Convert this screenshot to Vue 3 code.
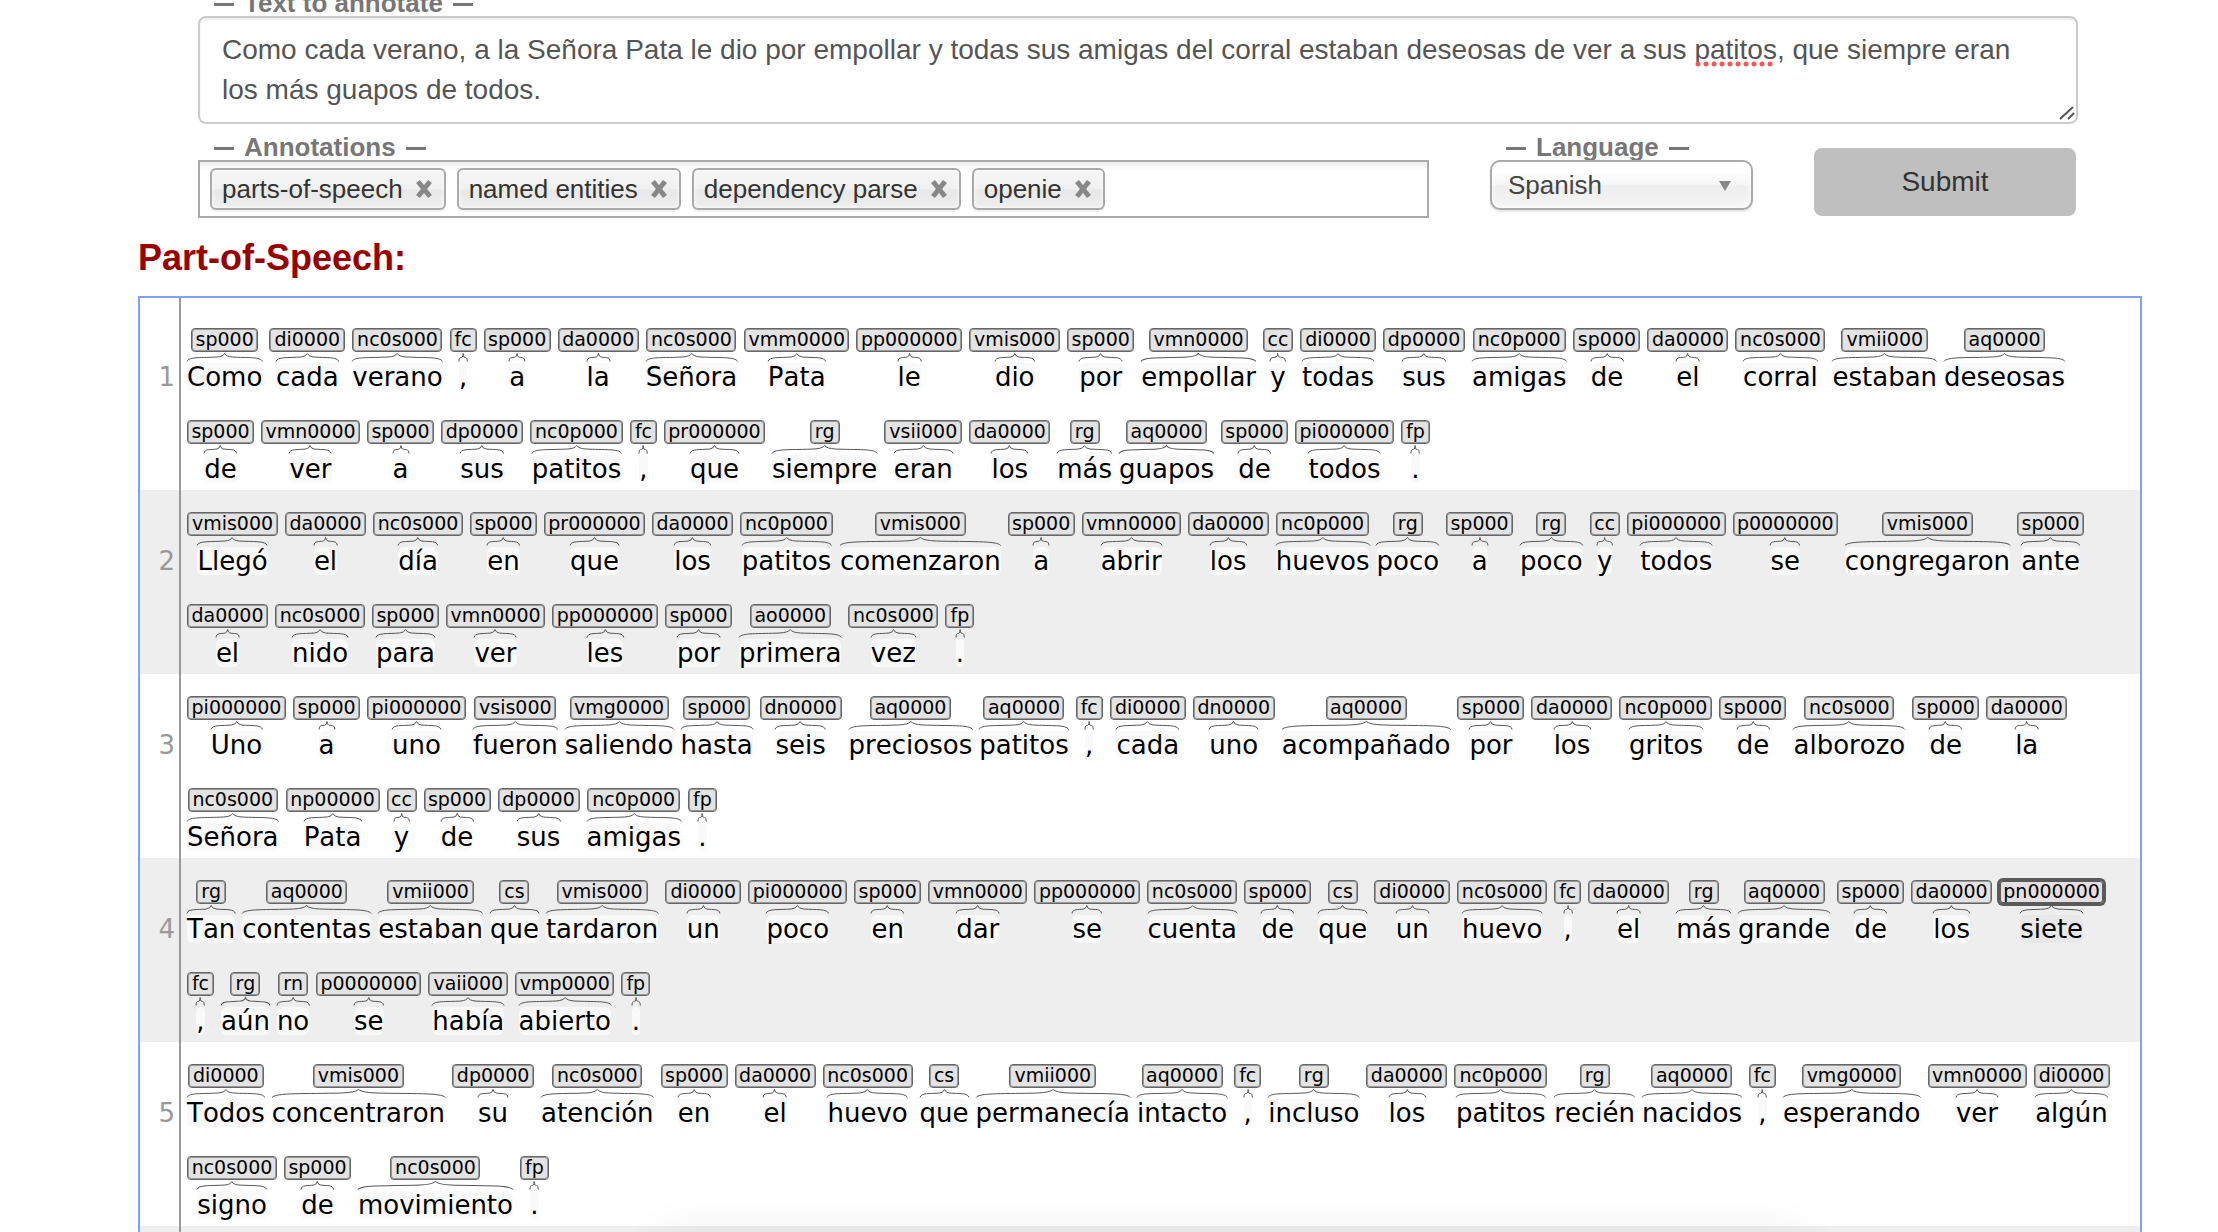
<script setup>
import { ref } from 'vue'

const text = ref(
  'Como cada verano, a la Señora Pata le dio por empollar y todas sus amigas del corral estaban deseosas de ver a sus patitos, que siempre eran los más guapos de todos.'
)
const language = ref('es')
const annotators = ref(['parts-of-speech', 'named entities', 'dependency parse', 'openie'])
const remove = (name) => {
  annotators.value = annotators.value.filter((a) => a !== name)
}

// Box width of every tag, in pixels
const tagWidths = {
  fc: 27, fp: 29, rg: 30, rn: 30, cc: 30, cs: 30,
  sp000: 67, di0000: 76, vsii000: 78, vaii000: 80,
  da0000: 81, aq0000: 81, ao0000: 81, dp0000: 82, dn0000: 82, vsis000: 82,
  vmii000: 87, nc0s000: 90, vmis000: 91, nc0p000: 93, np00000: 94,
  vmn0000: 99, vmg0000: 99, vmp0000: 99, pi000000: 99, pr000000: 101,
  vmm0000: 105, pn000000: 105, p0000000: 105, pp000000: 106
}

const parse = (line) =>
  line.split(' ').map((pair) => {
    const [word, tag] = pair.split('/')
    return { word, tag, width: tagWidths[tag] }
  })

const sentences = [
  [
    'Como/sp000 cada/di0000 verano/nc0s000 ,/fc a/sp000 la/da0000 Señora/nc0s000 Pata/vmm0000 le/pp000000 dio/vmis000 por/sp000 empollar/vmn0000 y/cc todas/di0000 sus/dp0000 amigas/nc0p000 de/sp000 el/da0000 corral/nc0s000 estaban/vmii000 deseosas/aq0000',
    'de/sp000 ver/vmn0000 a/sp000 sus/dp0000 patitos/nc0p000 ,/fc que/pr000000 siempre/rg eran/vsii000 los/da0000 más/rg guapos/aq0000 de/sp000 todos/pi000000 ./fp'
  ],
  [
    'Llegó/vmis000 el/da0000 día/nc0s000 en/sp000 que/pr000000 los/da0000 patitos/nc0p000 comenzaron/vmis000 a/sp000 abrir/vmn0000 los/da0000 huevos/nc0p000 poco/rg a/sp000 poco/rg y/cc todos/pi000000 se/p0000000 congregaron/vmis000 ante/sp000',
    'el/da0000 nido/nc0s000 para/sp000 ver/vmn0000 les/pp000000 por/sp000 primera/ao0000 vez/nc0s000 ./fp'
  ],
  [
    'Uno/pi000000 a/sp000 uno/pi000000 fueron/vsis000 saliendo/vmg0000 hasta/sp000 seis/dn0000 preciosos/aq0000 patitos/aq0000 ,/fc cada/di0000 uno/dn0000 acompañado/aq0000 por/sp000 los/da0000 gritos/nc0p000 de/sp000 alborozo/nc0s000 de/sp000 la/da0000',
    'Señora/nc0s000 Pata/np00000 y/cc de/sp000 sus/dp0000 amigas/nc0p000 ./fp'
  ],
  [
    'Tan/rg contentas/aq0000 estaban/vmii000 que/cs tardaron/vmis000 un/di0000 poco/pi000000 en/sp000 dar/vmn0000 se/pp000000 cuenta/nc0s000 de/sp000 que/cs un/di0000 huevo/nc0s000 ,/fc el/da0000 más/rg grande/aq0000 de/sp000 los/da0000 siete/pn000000',
    ',/fc aún/rg no/rn se/p0000000 había/vaii000 abierto/vmp0000 ./fp'
  ],
  [
    'Todos/di0000 concentraron/vmis000 su/dp0000 atención/nc0s000 en/sp000 el/da0000 huevo/nc0s000 que/cs permanecía/vmii000 intacto/aq0000 ,/fc incluso/rg los/da0000 patitos/nc0p000 recién/rg nacidos/aq0000 ,/fc esperando/vmg0000 ver/vmn0000 algún/di0000',
    'signo/nc0s000 de/sp000 movimiento/nc0s000 ./fp'
  ]
].map((lines) => lines.map(parse))
</script>

<template>
  <div class="page">
    <form class="form" @submit.prevent>
      <div class="field">
        <label class="legend" for="text">Text to annotate</label>
        <div class="text-wrap">
          <textarea id="text" v-model="text" spellcheck="false"></textarea>
          <span class="spelling"></span>
          <svg class="grip" width="16" height="14" viewBox="0 0 16 14">
            <path d="M1 13L14 1M9 13L15 7" fill="none" stroke="#555" stroke-width="2" />
          </svg>
        </div>
      </div>
      <div class="controls">
        <div class="field grow">
          <label class="legend" for="annotators">Annotations</label>
          <div class="chips">
            <span v-for="name in annotators" :key="name" class="chip">
              {{ name }}
              <button type="button" class="close" :aria-label="'Remove ' + name" @click="remove(name)">
                <svg width="18" height="20" viewBox="0 0 18 20">
                  <path d="M3 2.500L15 17.500M15 2.500L3 17.500" stroke="#888" stroke-width="5" />
                </svg>
              </button>
            </span>
            <input id="annotators" class="chip-input" type="text" />
          </div>
        </div>
        <div class="field">
          <label class="legend" for="language">Language</label>
          <div class="select-wrap">
            <select id="language" v-model="language">
              <option value="en">English</option>
              <option value="es">Spanish</option>
            </select>
            <svg class="arrow" width="12" height="10" viewBox="0 0 12 10">
              <path d="M0 0H12L6 10Z" fill="#888" />
            </svg>
          </div>
        </div>
        <button type="submit" class="submit">Submit</button>
      </div>
    </form>

    <h4 class="title">Part-of-Speech:</h4>

    <div class="panel">
      <div v-for="(lines, i) in sentences" :key="i" class="sentence">
        <div class="number">{{ i + 1 }}</div>
        <div class="lines">
          <div v-for="(line, j) in lines" :key="j" class="line">
            <div
              v-for="(t, k) in line"
              :key="k"
              class="token"
              :class="{ active: t.tag === 'pn000000' }"
            >
              <span class="tag" :style="{ width: t.width + 'px' }">{{ t.tag }}</span>
              <span class="mark">
                <svg class="brace" viewBox="0 0 100 9" preserveAspectRatio="none">
                  <path
                    d="M0 8.500C2 3.500 20 5 40 4Q48 3.500 50 0.500Q52 3.500 60 4C80 5 98 3.500 100 8.500"
                    fill="none"
                    stroke="#555"
                    vector-effect="non-scaling-stroke"
                  />
                </svg>
                <span class="word">{{ t.word }}</span>
              </span>
            </div>
          </div>
        </div>
      </div>
      <div class="sentence">
        <div class="number"></div>
        <div class="lines"></div>
      </div>
    </div>
    <div class="shade"></div>
  </div>
</template>

<style>
body {
  margin: 0;
  background: #fff;
}
</style>

<style scoped>
.page {
  position: relative;
  box-sizing: border-box;
  height: 100vh;
  overflow: hidden;
  padding: 0 76px 0 138px;
  font-family: "Liberation Sans", Arial, sans-serif;
  font-size: 26px;
  color: #333;
}
.form {
  margin: -12px 64px 0 60px;
}
.field {
  display: flex;
  flex-direction: column;
}
.grow {
  flex: 1;
}
.legend {
  display: flex;
  align-items: center;
  gap: 10px;
  padding: 2px 0 0 16px;
  line-height: 26px;
  font-weight: bold;
  color: #777;
}
.legend::before,
.legend::after {
  content: "";
  width: 20px;
  height: 3px;
  margin-top: 3px;
  background: #777;
}
.text-wrap,
.select-wrap {
  position: relative;
  display: flex;
}
textarea {
  flex: 1;
  box-sizing: border-box;
  height: 108px;
  padding: 12px 48px 12px 22px;
  border: 2px solid #ccc;
  border-radius: 8px;
  box-shadow: inset 0 2px 2px rgba(0, 0, 0, 0.075);
  font: 28px/40px "Liberation Sans", Arial, sans-serif;
  color: #555;
  outline: none;
  overflow: hidden;
  resize: none;
}
.spelling {
  position: absolute;
  left: 1497px;
  top: 45px;
  width: 80px;
  height: 6px;
  background: radial-gradient(circle at 3px 3px, #f55 2px, transparent 3px) 0 0 / 8px 6px;
}
.grip {
  position: absolute;
  right: 3px;
  bottom: 4px;
}
.controls {
  display: flex;
  align-items: flex-start;
  gap: 61px;
  padding: 8px 2px 0 0;
}
.chips {
  display: flex;
  gap: 11px;
  box-sizing: border-box;
  height: 58px;
  padding: 6px 10px;
  border: 2px solid #aaa;
  background: linear-gradient(#eee 1%, #fff 15%);
}
.chip {
  display: flex;
  align-items: center;
  gap: 12px;
  box-sizing: border-box;
  height: 42px;
  padding: 0 11px 0 10px;
  border: 2px solid #aaa;
  border-radius: 6px;
  background: linear-gradient(#f4f4f4 20%, #f0f0f0 50%, #e8e8e8 52%, #eee);
  box-shadow: inset 0 0 4px #fff, 0 2px 0 rgba(0, 0, 0, 0.05);
  white-space: nowrap;
}
.close {
  display: flex;
  padding: 0;
  border: 0;
  background: none;
}
.chip-input {
  flex: 1;
  min-width: 0;
  padding: 0;
  border: 0;
  background: none;
  outline: none;
}
select {
  appearance: none;
  box-sizing: border-box;
  width: 263px;
  height: 50px;
  padding: 0 16px;
  border: 2px solid #aaa;
  border-radius: 10px;
  background: linear-gradient(#fff 20%, #f6f6f6 50%, #eee 52%, #f4f4f4);
  box-shadow: inset 0 0 6px #fff, 0 2px 2px rgba(0, 0, 0, 0.1);
  font: 26px "Liberation Sans", Arial, sans-serif;
  color: #444;
}
.arrow {
  position: absolute;
  right: 22px;
  top: 21px;
}
.submit {
  width: 262px;
  height: 68px;
  margin-top: 16px;
  padding: 0;
  border: 0;
  border-radius: 8px;
  background: #bfbfbf;
  font: 28px "Liberation Sans", Arial, sans-serif;
  color: #333;
}
.title {
  margin: 20px 0 18px;
  font-size: 36px;
  line-height: 40px;
  font-weight: bold;
  color: #990000;
}
.panel {
  border: 2px solid #7fa2ff;
  font-family: "DejaVu Sans", Verdana, sans-serif;
  font-kerning: none;
}
.sentence {
  display: flex;
  min-height: 184px;
  background: #fff;
}
.sentence:nth-child(even) {
  background: #eee;
}
.sentence:first-child .number,
.sentence:first-child .lines {
  padding-top: 8px;
}
.number {
  box-sizing: border-box;
  width: 41px;
  padding-right: 4px;
  border-right: 2px solid #999;
  text-align: right;
  line-height: 142px;
  color: #999;
}
.lines {
  flex: 1;
  padding-left: 6px;
}
.line {
  display: flex;
  gap: 7px;
  height: 92px;
}
.token {
  display: flex;
  flex-direction: column;
  align-items: center;
  padding-top: 22px;
}
.tag {
  box-sizing: border-box;
  height: 24px;
  border: 1px solid #666;
  border-radius: 4px;
  background: #e3e3e3;
  box-shadow: inset 0 0 0 1px #999;
  font-size: 19px;
  line-height: 20px;
  text-align: center;
  color: #000;
}
.mark {
  display: flex;
  flex-direction: column;
  position: relative;
}
.brace {
  position: absolute;
  width: 100%;
  height: 9px;
  margin: 1px 0;
  overflow: visible;
}
.word {
  margin-top: 11px;
  border-radius: 6px;
  background: #f9f9f9;
  line-height: 28px;
  color: #000;
}
.active .tag {
  border-color: #5a5a5a;
  background: #e6dfe1;
  box-shadow: inset 0 0 0 1px #5a5a5a, 0 0 0 2px #5a5a5a;
}
.active .word {
  background: #e8e8e8;
}
.shade {
  position: absolute;
  left: 665px;
  right: 418px;
  bottom: -80px;
  height: 76px;
  box-shadow: 0 0 50px rgba(0, 0, 0, 0.08);
  pointer-events: none;
}
</style>
